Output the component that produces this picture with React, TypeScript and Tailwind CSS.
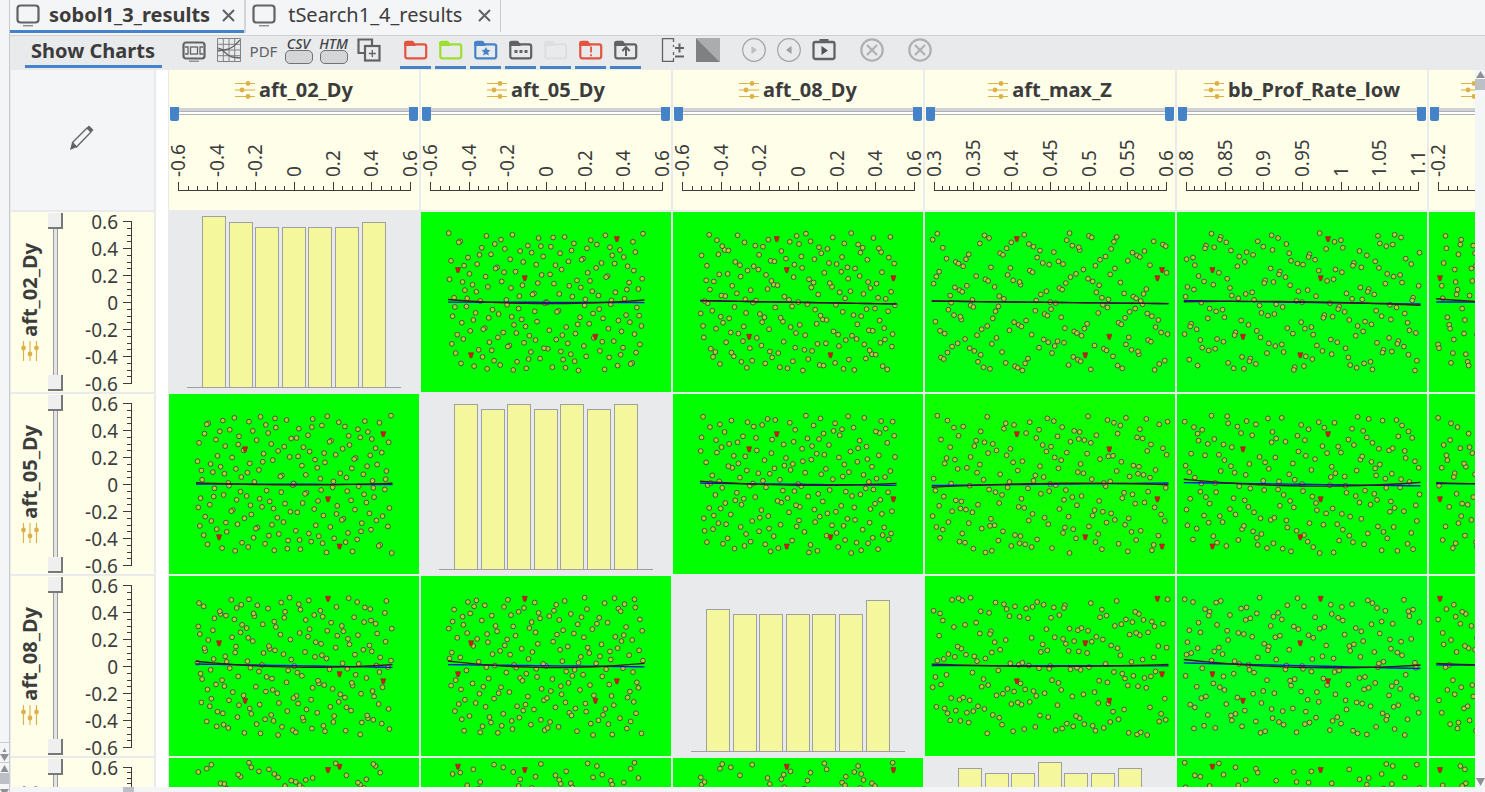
import { ReactNode } from "react";
import { clsx } from "clsx";

interface Variable {
  name: string;
  poly: number;
  init: number[];
  labels: string[];
  minor: number;
  start: number;
  xSpan: number;
  ySpan: number;
  bars: number[];
}

const TENTHS = ["-0.6", "-0.4", "-0.2", "0", "0.2", "0.4", "0.6"];

// start and spans are fractions of the panel, bars are heights in panel pixels
const VARIABLES: Variable[] = [
  { name: "aft_02_Dy", poly: 0, init: [1, 1, 1, 1, 1, 1, 1, 1], labels: TENTHS, minor: 4, start: 0.108, xSpan: 0.786, ySpan: 0.772, bars: [171, 165, 160, 160, 160, 160, 165] },
  { name: "aft_05_Dy", poly: 3, init: [1], labels: TENTHS, minor: 4, start: 0.108, xSpan: 0.786, ySpan: 0.772, bars: [165, 160, 165, 160, 165, 160, 165] },
  { name: "aft_08_Dy", poly: 7, init: [1, 1], labels: TENTHS, minor: 4, start: 0.108, xSpan: 0.786, ySpan: 0.772, bars: [142, 137, 137, 137, 137, 137, 151] },
  { name: "aft_max_Z", poly: 11, init: [1, 3, 7], labels: ["0.3", "0.35", "0.4", "0.45", "0.5", "0.55", "0.6"], minor: 5, start: 0.027, xSpan: 0.947, ySpan: 0.945, bars: [165, 160, 160, 171, 160, 160, 165] },
  { name: "bb_Prof_Rate_low", poly: 13, init: [1, 1, 5], labels: ["0.8", "0.85", "0.9", "0.95", "1", "1.05", "1.1"], minor: 5, start: 0.027, xSpan: 0.947, ySpan: 0.945, bars: [] },
  { name: "bb_Prof_Rate_up", poly: 19, init: [1, 3, 1, 1], labels: ["-0.2", "0.2", "0.6", "1"], minor: 8, start: 0.029, xSpan: 0.947, ySpan: 0.945, bars: [] },
];

const SAMPLES = 200;
const FAILED = [3, 38, 53, 80, 150];

const PANEL_COLORS: Record<string, string> = {
  "0-3": "#00ff0c",
  "0-4": "#00ff0c",
  "1-3": "#0eff00",
  "2-4": "#00ff18",
};

function directions(poly: number, init: number[]) {
  const m = [...init];
  const degree = init.length;
  while (m.length < 8) {
    const k = m.length;
    let next = m[k - degree];
    for (let j = 1; j <= degree; j++) {
      if ((poly >> (degree - j)) & 1) next ^= m[k - j] << j;
    }
    m.push(next);
  }
  return m.map((v, i) => v << (7 - i));
}

// Sobol sequence in Gray code order, one 8 bit column per variable
const COLUMNS = VARIABLES.map((variable) => {
  const dirs = directions(variable.poly, variable.init);
  return Array.from({ length: SAMPLES }, (_, i) => {
    const n = i + 1;
    const gray = n ^ (n >> 1);
    return dirs.reduce((acc, d, bit) => ((gray >> bit) & 1 ? acc ^ d : acc), 0) / 256;
  });
});

// least squares polynomial through the samples, solved by elimination
function fit(xs: number[], ys: number[], degree: number) {
  const size = degree + 1;
  const rows = Array.from({ length: size }, (_, r) => [
    ...Array.from({ length: size }, (_, c) => xs.reduce((s, x) => s + x ** (r + c), 0)),
    xs.reduce((s, x, i) => s + ys[i] * x ** r, 0),
  ]);
  for (let p = 0; p < size; p++) {
    for (let r = 0; r < size; r++) {
      if (r === p) continue;
      const f = rows[r][p] / rows[p][p];
      rows[r] = rows[r].map((v, c) => v - f * rows[p][c]);
    }
  }
  const coef = rows.map((row, r) => row[size] / row[r]);
  return (x: number) => coef.reduce((s, c, i) => s + c * x ** i, 0);
}

function ScatterPanel({ row, col }: { row: number; col: number }) {
  const vx = VARIABLES[col];
  const vy = VARIABLES[row];
  const xs = COLUMNS[col];
  const ys = COLUMNS[row];
  const px = (v: number) => 250 * (vx.start + vx.xSpan * v);
  const py = (v: number) => 180 * (1 - vy.start - vy.ySpan * v) - 1;
  const curve = (degree: number) => {
    const f = fit(xs, ys, degree);
    return Array.from({ length: 21 }, (_, i) => `${px(i / 20)},${py(f(i / 20))}`).join(" ");
  };

  return (
    <svg
      viewBox="0 0 250 180"
      className="h-[180px] w-[250px]"
      style={{ backgroundColor: PANEL_COLORS[`${row}-${col}`] ?? "#00ff00" }}
      role="img"
      aria-label={`${vy.name} / ${vx.name}`}
    >
      {xs.map((x, i) =>
        FAILED.includes(i + 1) ? null : (
          <circle key={i} cx={px(x)} cy={py(ys[i])} r="2.4" fill="#a9d42c" stroke="#4c5048" strokeWidth="1" />
        )
      )}
      {FAILED.map((n) => (
        <path
          key={n}
          d={`M${px(xs[n - 1]) - 2.5} ${py(ys[n - 1]) - 2.5}h5l-1.5 5h-2z`}
          fill="#d8141c"
          stroke="#7a3a14"
          strokeWidth="0.7"
        />
      ))}
      <polyline points={curve(1)} fill="none" stroke="#0018d8" strokeWidth="1.4" />
      <polyline points={curve(2)} fill="none" stroke="#4a1410" strokeWidth="1.4" />
    </svg>
  );
}

function HistogramPanel({ bars }: { bars: number[] }) {
  return (
    <svg viewBox="0 0 250 180" className="h-[180px] w-[250px] bg-[#e9eaec]" role="img" aria-label="Histogram">
      {bars.map((h, i) => (
        <rect
          key={i}
          x={Math.round(33 + i * 26.6) + 0.5}
          y={175.5 - h}
          width="23"
          height={h}
          fill="#f4f79c"
          stroke="#a0a0a4"
        />
      ))}
      <path d="M18 175.5h214" stroke="#a0a0a4" />
    </svg>
  );
}

function SlidersIcon({ vertical = false }: { vertical?: boolean }) {
  return (
    <svg viewBox="0 0 20 20" className={clsx("h-5 w-5 shrink-0", vertical && "-rotate-90")} aria-hidden="true">
      <path d="M0 3.5h20M0 16.5h20" stroke="#ddb04a" strokeWidth="1.2" />
      <path d="M0 10h20" stroke="#ecd48e" strokeWidth="2" />
      <circle cx="13" cy="3.5" r="2.4" fill="#ddb04a" />
      <circle cx="7" cy="10" r="2.4" fill="#ddb04a" />
      <circle cx="13" cy="16.5" r="2.4" fill="#ddb04a" />
    </svg>
  );
}

const H_THUMB =
  "pointer-events-none absolute inset-0 h-full w-full appearance-none bg-transparent [&::-webkit-slider-thumb]:pointer-events-auto [&::-webkit-slider-thumb]:h-[14px] [&::-webkit-slider-thumb]:w-[9px] [&::-webkit-slider-thumb]:appearance-none [&::-webkit-slider-thumb]:rounded-b-[2px] [&::-webkit-slider-thumb]:bg-[#4682c8]";

const V_THUMB =
  "pointer-events-none absolute inset-0 h-full w-full appearance-none bg-transparent [writing-mode:vertical-lr] [direction:rtl] [&::-webkit-slider-thumb]:pointer-events-auto [&::-webkit-slider-thumb]:h-4 [&::-webkit-slider-thumb]:w-[15px] [&::-webkit-slider-thumb]:appearance-none [&::-webkit-slider-thumb]:border-r-2 [&::-webkit-slider-thumb]:border-b-2 [&::-webkit-slider-thumb]:border-[#77787a] [&::-webkit-slider-thumb]:bg-[#efefef]";

function ColumnHeader({ variable }: { variable: Variable }) {
  const steps = variable.labels.length - 1;
  const count = steps * variable.minor;
  return (
    <div className="flex h-[140px] w-[250px] flex-col bg-[#ffffe9]">
      <div className="flex h-[37px] items-center justify-center gap-1 pt-0.5">
        <SlidersIcon />
        <span className="text-[20px] leading-6 font-bold">{variable.name}</span>
      </div>
      <div className="relative mx-px h-[14px] pt-px">
        <div className="h-[7px] border-b border-[#b0b2b5] bg-white">
          <div className="h-1 border-b border-[#b0b2b5] bg-[#cfd3d8]" />
        </div>
        <input type="range" aria-label={`${variable.name} minimum`} defaultValue={0} className={H_THUMB} />
        <input type="range" aria-label={`${variable.name} maximum`} defaultValue={100} className={H_THUMB} />
      </div>
      <svg viewBox="0 0 250 89" className="h-[89px] w-[250px] overflow-visible">
        <path
          d={`M9 69.5H242${Array.from(
            { length: count + 1 },
            (_, i) => `M${Math.round(9 + (i * 232) / count) + 0.5} 70v${i % variable.minor ? -5 : -9}`
          ).join("")}`}
          stroke="#3c3c3c"
          fill="none"
        />
        {variable.labels.map((label, i) => (
          <text
            key={label}
            transform={`translate(${16 + Math.round((i * 232) / steps)} 56) rotate(-90)`}
            fontSize="19"
            fill="#3c3c3c"
          >
            {label}
          </text>
        ))}
      </svg>
    </div>
  );
}

function RowHeader({ variable }: { variable: Variable }) {
  const count = (variable.labels.length - 1) * variable.minor;
  const labels = variable === VARIABLES[3] ? TENTHS.slice(-1) : [...variable.labels].reverse();
  return (
    <div className="flex h-[180px] shrink-0 bg-[#ffffe9]">
      <div className="flex w-[37px] flex-col items-center justify-center gap-1">
        <span className="rotate-180 text-[20px] leading-6 font-bold [writing-mode:vertical-rl]">{variable.name}</span>
        <SlidersIcon vertical />
      </div>
      <div className="relative my-px w-[15px]">
        <div className="mx-[5px] h-full border-x border-[#9c9c9e] bg-[#e4e4e6]" />
        <input type="range" aria-label={`${variable.name} lower limit`} defaultValue={0} className={V_THUMB} />
        <input type="range" aria-label={`${variable.name} upper limit`} defaultValue={100} className={V_THUMB} />
      </div>
      <svg viewBox="0 0 91 180" className="h-[180px] w-[91px] overflow-visible">
        <path
          d={`M68.5 9V172${Array.from(
            { length: count + 1 },
            (_, i) => `M69 ${Math.round(9 + (i * 162) / count) + 0.5}h${i % variable.minor ? -5 : -9}`
          ).join("")}`}
          stroke="#3c3c3c"
          fill="none"
        />
        {labels.map((label, i) => (
          <text key={label} x="55" y={17 + i * 27} textAnchor="end" fontSize="19" fill="#3c3c3c">
            {label}
          </text>
        ))}
      </svg>
    </div>
  );
}

function Tab({ label, active = false }: { label: string; active?: boolean }) {
  return (
    <div
      className={clsx(
        "flex h-[33px] items-center border-b-[3px] pr-[9px] pl-[6px]",
        active ? "border-[#4682c8]" : "border-transparent"
      )}
    >
      <button type="button" className={clsx("flex items-center", active ? "gap-[9px] font-bold" : "gap-3")}>
        <svg viewBox="0 0 24 24" className="h-6 w-6" fill="none" aria-hidden="true">
          <rect x="1.5" y="2.5" width="21" height="17" rx="3" stroke="#606264" strokeWidth="2.2" />
          <path d="M7 22.7h10" stroke="#8a8c8e" strokeWidth="1.4" />
        </svg>
        <span className="text-[20px] leading-6">{label}</span>
      </button>
      <button type="button" aria-label={`Close ${label}`} className={active ? "ml-3" : "ml-4"}>
        <svg viewBox="0 0 13 13" className="h-[13px] w-[13px]" aria-hidden="true">
          <path d="M1 1l11 11M12 1L1 12" stroke="#606264" strokeWidth="2" />
        </svg>
      </button>
    </div>
  );
}

function Tool({ label, underline = false, children }: { label: string; underline?: boolean; children: ReactNode }) {
  return (
    <button type="button" aria-label={label} className="flex h-[34px] w-[35px] shrink-0 flex-col items-center pt-[2px]">
      {children}
      {underline && <span className="mt-1 h-[3px] w-[31px] bg-[#4682c8]" />}
    </button>
  );
}

function Icon({ children }: { children: ReactNode }) {
  return (
    <svg viewBox="0 0 24 24" className="h-6 w-6 shrink-0" fill="none" stroke="#606264" aria-hidden="true">
      {children}
    </svg>
  );
}

function Folder({ color, children }: { color: string; children?: ReactNode }) {
  return (
    <Icon>
      <path d="M1.3 7V5.5q0-1.7 1.7-1.7h5l2 2.5h10.200q2 0 2 2v10q0 2-2 2H3.300q-2 0-2-2z" stroke={color} strokeWidth="2.2" />
      <path d="M.3 8V5q0-2 2-2h6.700l2.500 3.500v1.500z" fill={color} stroke="none" />
      {children}
    </Icon>
  );
}

function Badge({ text }: { text: string }) {
  return (
    <span className="flex flex-col items-center">
      <span className="text-[14px] leading-3 font-medium text-[#404244] italic">{text}</span>
      <span className="h-[14px] w-[28px] rounded-[5px] border border-[#707274] bg-[#d4d5d6]" />
    </span>
  );
}

function Toolbar() {
  return (
    <div className="flex h-[34px] shrink-0 bg-[#e9eaec] pl-[15px]">
      <button
        type="button"
        className="mr-[14px] flex h-8 w-[137px] shrink-0 items-center justify-center border-b-[3px] border-[#4682c8] pr-px text-[20px] font-bold"
      >
        Show Charts
      </button>
      <Tool label="Display">
        <Icon>
          <rect x="1.5" y="4.5" width="21" height="16" rx="2.5" strokeWidth="2.2" />
          <rect x="8.5" y="9" width="7" height="7" strokeWidth="1.3" />
          <path d="M3 9h3v7H3M21 9h-3v7h3" strokeWidth="1.3" />
          <path d="M7 23.2h10" stroke="#8a8c8e" strokeWidth="1.4" />
        </Icon>
      </Tool>
      <Tool label="Matrix chart">
        <Icon>
          <path d="M.5.5h23v23H.5zM6.3.5v23M12 .5v23M17.7.5v23M.5 6.3h23M.5 12h23M.5 17.7h23" stroke="#808284" strokeWidth="1" />
          <path d="M1 10l6 2 5-1 5-3 6-6M1 13l4-1 6 5 4 2 8 1" strokeWidth="1.3" />
        </Icon>
      </Tool>
      <Tool label="Export PDF">
        <span className="text-[15px] leading-[26px] text-[#606264]">PDF</span>
      </Tool>
      <Tool label="Export CSV">
        <Badge text="CSV" />
      </Tool>
      <Tool label="Export HTM">
        <Badge text="HTM" />
      </Tool>
      <Tool label="Duplicate">
        <Icon>
          <path d="M8 15H1.5V1.500H15V8" strokeWidth="2.2" />
          <rect x="8" y="8" width="14.5" height="14.5" strokeWidth="2.2" />
          <path d="M15.3 12v7M11.8 15.5h7" strokeWidth="1.3" />
        </Icon>
      </Tool>
      <div className="ml-3 flex">
        <Tool label="Red folder" underline>
          <Folder color="#e25340" />
        </Tool>
        <Tool label="Green folder" underline>
          <Folder color="#9ede2e" />
        </Tool>
        <Tool label="Favourites" underline>
          <Folder color="#4682c8">
            <path d="M12 9l1.4 2.8 3 .4-2.200 2.100.6 3.100-2.800-1.500-2.800 1.500.6-3.100-2.200-2.100 3-.4z" fill="#4682c8" stroke="none" />
          </Folder>
        </Tool>
        <Tool label="More" underline>
          <Folder color="#606264">
            <path d="M5.5 13.5h3M10.5 13.5h3M15.5 13.5h3" strokeWidth="3" />
          </Folder>
        </Tool>
        <Tool label="Empty folder" underline>
          <Folder color="#dedfe0" />
        </Tool>
        <Tool label="Errors" underline>
          <Folder color="#e25340">
            <path d="M12 8.5v6M12 16.2v2" stroke="#e25340" strokeWidth="1.8" />
          </Folder>
        </Tool>
        <Tool label="Upload folder" underline>
          <Folder color="#606264">
            <path d="M12 18V9.5M8.3 13l3.7-4 3.7 4" strokeWidth="2" />
          </Folder>
        </Tool>
      </div>
      <div className="ml-3 flex">
        <Tool label="Adjust columns">
          <Icon>
            <path d="M12.5 4V.7H1.5v22.600h11V20M12.5 7v2M12.5 14v3" strokeWidth="1.3" />
            <path d="M14 10h9M18.5 5.5v9M14 18.5h9" strokeWidth="2" />
          </Icon>
        </Tool>
        <Tool label="Contrast">
          <Icon>
            <path d="M0 0h24v24z" fill="#aaacae" stroke="none" />
            <path d="M0 0v24h24z" fill="#7e8082" stroke="none" />
          </Icon>
        </Tool>
      </div>
      <div className="ml-[11px] flex">
        <Tool label="Play">
          <Icon>
            <circle cx="12" cy="12" r="11.3" stroke="#a2a4a6" strokeWidth="1.2" />
            <path d="M9.5 8l5.500 4-5.500 4z" fill="#bcbec0" stroke="none" />
          </Icon>
        </Tool>
        <Tool label="Back">
          <Icon>
            <circle cx="12" cy="12" r="11.3" stroke="#a2a4a6" strokeWidth="1.2" />
            <path d="M14.5 8L9 12l5.500 4z" fill="#9c9ea0" stroke="none" />
          </Icon>
        </Tool>
        <Tool label="Play batch">
          <Icon>
            <rect x="1.5" y="4" width="21" height="17" rx="2" strokeWidth="2.3" />
            <path d="M7.5 2.5h9" strokeWidth="3" />
            <path d="M9.5 8l6.500 4.500-6.500 4.500z" fill="#505254" stroke="none" />
          </Icon>
        </Tool>
      </div>
      <div className="ml-[13px] flex gap-[13px]">
        {["Cancel", "Cancel all"].map((label) => (
          <Tool key={label} label={label}>
            <Icon>
              <circle cx="12" cy="12" r="10.7" stroke="#aeb0b2" strokeWidth="2.2" />
              <path d="M7 7l10 10M17 7L7 17" stroke="#aeb0b2" strokeWidth="2.2" />
            </Icon>
          </Tool>
        ))}
      </div>
    </div>
  );
}

export default function App() {
  const rows = VARIABLES.slice(0, 4);
  return (
    <div className="flex h-screen overflow-hidden bg-[#f4f5f7] font-['Noto_Sans','Open_Sans',sans-serif] text-[#3c3c3c]">
      <aside className="flex w-[10px] shrink-0 flex-col justify-end border-r border-[#c8cacd]">
        <svg viewBox="0 0 9 50" className="h-[50px] w-[9px]" aria-hidden="true">
          <path d="M0 .5h9M0 20.5h9" stroke="#c8cacd" />
          <path d="M4.5 6l2 4h-4zM0 12h9l-4.500 7zM4.5 23l4 7h-8zM0 47h9l-4.500 7z" fill="#8e9094" />
          <path d="M0 31h9v11H0z" fill="#bcc0c6" />
        </svg>
      </aside>
      <div className="flex min-w-0 flex-1 flex-col">
        <nav className="flex h-9 shrink-0 border-b border-[#cfd1d4]">
          <Tab label="sobol1_3_results" active />
          <span className="h-[33px] w-[2px] bg-[#d2d4d8]" />
          <Tab label="tSearch1_4_results" />
          <span className="h-8 w-px bg-[#c8cacf]" />
        </nav>
        <Toolbar />
        <div className="flex min-h-0 flex-1">
          <div className="flex min-w-0 flex-1 flex-col">
            <main className="flex min-h-0 flex-1 overflow-hidden">
              <div className="flex w-[146px] shrink-0 flex-col gap-[2px] border-r-2 border-l border-[#e9eaec] bg-[#e9eaec]">
                <div className="flex h-[140px] shrink-0 items-center justify-center bg-[#f4f5f7] pr-0.5 pb-1">
                  <button type="button" aria-label="Edit">
                    <svg viewBox="0 0 26 26" className="h-[26px] w-[26px]" fill="none" aria-hidden="true">
                      <path d="M3.5 17.5L18 3l4 4L7.5 22z" stroke="#606264" strokeWidth="1.3" />
                      <path d="M1 25l2-7.500L8 22zM18 2.5l2-2 4.500 4.500-2 2z" fill="#606264" />
                    </svg>
                  </button>
                </div>
                {rows.map((variable) => (
                  <RowHeader key={variable.name} variable={variable} />
                ))}
              </div>
              <div className="w-3 shrink-0 bg-white" />
              <div className="min-w-0 flex-1 overflow-hidden bg-[#e9eaec] pl-px">
                <div className="grid w-max grid-cols-[repeat(6,250px)] gap-[2px]">
                  {VARIABLES.map((variable) => (
                    <ColumnHeader key={variable.name} variable={variable} />
                  ))}
                  {rows.map((variable, row) =>
                    VARIABLES.map((_, col) =>
                      row === col ? (
                        <HistogramPanel key={`${row}-${col}`} bars={variable.bars} />
                      ) : (
                        <ScatterPanel key={`${row}-${col}`} row={row} col={col} />
                      )
                    )
                  )}
                </div>
              </div>
            </main>
            <div className="h-[5px] shrink-0 bg-[#f4f5f7] pl-[113px]">
              <div className="h-full w-[11px] bg-[#bcc0c6]" />
            </div>
          </div>
          <div className="flex w-[10px] shrink-0 flex-col items-center bg-[#f4f5f7] pb-[6px]">
            <svg viewBox="0 0 9 8" className="h-[8px] w-[9px] shrink-0" aria-hidden="true">
              <path d="M4.5 1L9 8H0z" fill="#8e9094" />
            </svg>
            <div className="mt-px h-[11px] w-full bg-[#bcc0c6]" />
            <svg viewBox="0 0 9 8" className="mt-auto h-[8px] w-[9px] shrink-0" aria-hidden="true">
              <path d="M4.5 8L9 0H0z" fill="#8e9094" />
            </svg>
          </div>
        </div>
      </div>
    </div>
  );
}
